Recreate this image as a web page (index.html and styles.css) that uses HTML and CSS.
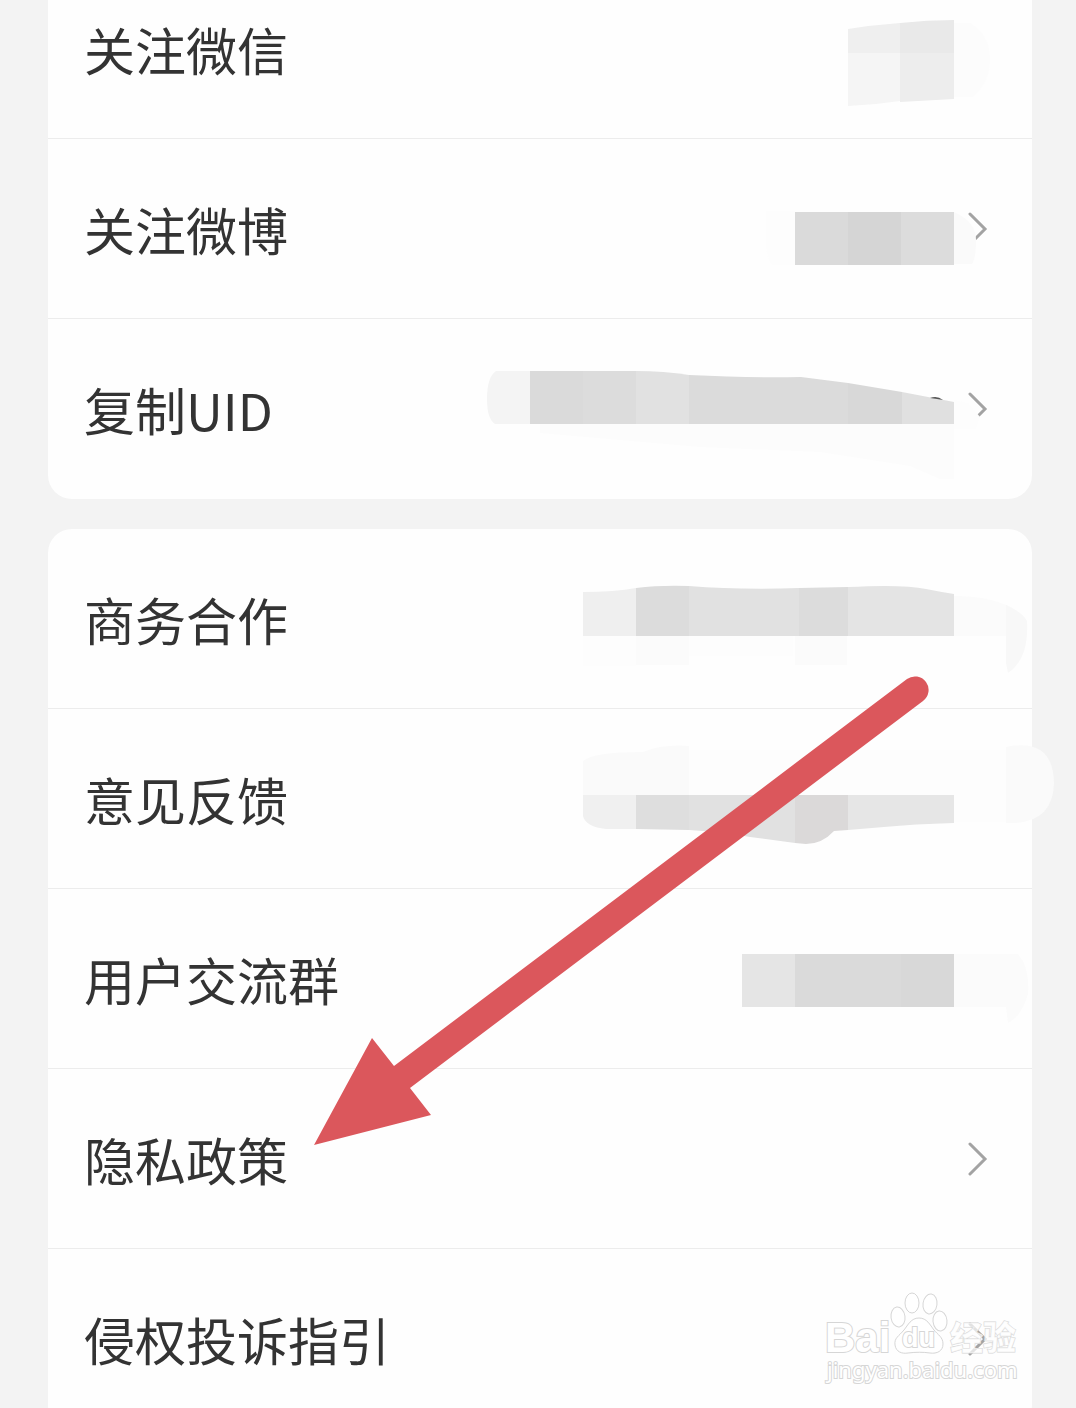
FILE: index.html
```html
<!DOCTYPE html>
<html lang="zh-CN">
<head>
    <meta charset="UTF-8">
    <meta name="viewport" content="width=device-width, initial-scale=1.0">
    <title>关于我们</title>
    <link rel="stylesheet" href="styles.css">
</head>
<body>
<main class="page">
    <nav class="card">
        <a class="row" href="#wechat">
            <span class="label">关注微信</span>
            <!-- mosaic over the account name -->
            <svg class="mosaic" viewBox="432 0 600 180" aria-hidden="true">
                <path fill="#fcfcfc" d="M954 64h16q20 12 20 36t-18 38h-18z"/>
                <path fill="#efefef" d="M848 70q25-4 52-6v30h-52z"/>
                <path fill="#f5f5f5" d="M848 94h52v48q-26 4-52 5z"/>
                <path fill="#e9e9e9" d="M900 64q27-3 54-3v33h-54z"/>
                <path fill="#ededed" d="M900 94h54v46l-54 3z"/>
            </svg>
        </a>
        <a class="row" href="#weibo">
            <span class="label">关注微博</span>
            <svg class="chevron" viewBox="0 0 20 34" aria-hidden="true"><path d="M2 2l15 15L2 32"/></svg>
            <svg class="mosaic" viewBox="432 0 600 180" aria-hidden="true">
                <path fill="#fdfdfd" d="M766 72h29v54h-22q-7-8-7-20z"/>
                <path fill="#fafafa" d="M954 73q22 10 22 28t-4 24h-18z"/>
                <path fill="#dadada" d="M795 73h53v53h-53z"/>
                <path fill="#d5d5d5" d="M848 73h53v53h-53z"/>
                <path fill="#dcdcdc" d="M901 73h53v53h-53z"/>
            </svg>
        </a>
        <a class="row" href="#uid">
            <span class="label">复制UID</span>
            <svg class="chevron" viewBox="0 0 20 34" aria-hidden="true"><path d="M2 2l15 15L2 32"/></svg>
            <svg class="mosaic" viewBox="432 0 600 180" aria-hidden="true">
                <path fill="#fcfcfc" d="M540 105h414v55h-14l-30-13-90-14-120-5-160-14z"/>
                <path fill="#fdfdfd" d="M954 81l14 3 12 14-4 12h-22z"/>
                <path fill="#f4f4f4" d="M530 52h-34q-9 6-9 28 0 20 8 25h35z"/>
                <path fill="#dadada" d="M530 52h53v53h-53z"/>
                <path fill="#dcdcdc" d="M583 52h53v53h-53z"/>
                <path fill="#e1e1e1" d="M636 52q28 0 53 4v49h-53z"/>
                <path fill="#dbdbdb" d="M689 56q60 3 112 2l47 6v41H689z"/>
                <path fill="#d8d8d8" d="M848 64l54 9v32h-54z"/>
                <path fill="#e0e0e0" d="M902 73l52 10v22h-52z"/>
                <path fill="#555" d="M930 79q7-3 13 2l-6-1z"/>
            </svg>
        </a>
    </nav>

    <nav class="card">
        <a class="row" href="#business">
            <span class="label">商务合作</span>
            <svg class="mosaic" viewBox="432 0 600 180" aria-hidden="true">
                <path fill="#fdfdfd" d="M583 107h53v30h-53zM689 107h104v20H689z"/>
                <path fill="#fbfbfb" d="M636 107h53v29h-53zM795 107h52v29h-52z"/>
                <path fill="#fbfbfb" d="M954 67q50 0 71 22v18h-71z"/>
                <path fill="#f8f8f8" d="M1006 76q16 7 21 16 2 38-19 52l-2-10z"/>
                <path fill="#efefef" d="M583 63q32 0 53-4v48h-53z"/>
                <path fill="#dcdcdc" d="M636 59q24-3 53-2v50h-53z"/>
                <path fill="#e1e1e1" d="M689 57q50 4 110 2v48H689z"/>
                <path fill="#dcdcdc" d="M799 59l49-1v49h-49z"/>
                <path fill="#e4e4e4" d="M848 58q55-3 78 2 15 3 28 5v42H848z"/>
            </svg>
        </a>
        <a class="row" href="#feedback">
            <span class="label">意见反馈</span>
            <svg class="mosaic" viewBox="432 0 600 180" aria-hidden="true">
                <path fill="#fdfdfd" d="M689 41h317v72H689z"/>
                <path fill="#fafafa" d="M583 86V52q10-9 60-9 20-8 46-6v49z"/>
                <path fill="#fafafa" d="M1006 38q47-10 48 36-1 42-48 40z"/>
                <path fill="#f0f0f0" d="M583 86h53v34h-30q-20-2-23-13z"/>
                <path fill="#dedede" d="M636 86h53v35l-53-1z"/>
                <path fill="#e1e1e1" d="M689 86h106v48l-45-6q-25-5-61-7z"/>
                <path fill="#dbd9d9" d="M795 86h53v35l-14 1q-12 13-28 13l-11-1z"/>
                <path fill="#e6e6e6" d="M848 86h106v28q-40 1-70 4l-36 3z"/>
            </svg>
        </a>
        <a class="row" href="#group">
            <span class="label">用户交流群</span>
            <svg class="mosaic" viewBox="432 0 600 180" aria-hidden="true">
                <path fill="#fbfbfb" d="M954 65h64q12 14 10 40-6 22-20 29l-2-16h-52z"/>
                <path fill="#e5e5e5" d="M742 65h53v53h-53z"/>
                <path fill="#dadada" d="M795 65h106v53H795z"/>
                <path fill="#d8d8d8" d="M901 65h53v53h-53z"/>
            </svg>
        </a>
        <a class="row" href="#privacy">
            <span class="label">隐私政策</span>
            <svg class="chevron" viewBox="0 0 20 34" aria-hidden="true"><path d="M2 2l15 15L2 32"/></svg>
        </a>
        <a class="row" href="#complaint">
            <span class="label">侵权投诉指引</span>
            <svg class="chevron" viewBox="0 0 20 34" aria-hidden="true"><path d="M2 2l15 15L2 32"/></svg>
            <svg class="watermark" viewBox="0 0 200 100" role="img" aria-label="Baidu 经验">
                <text class="wm-brand" x="2" y="63">Bai</text>
                <g class="wm-paw">
                    <ellipse cx="75" cy="28" rx="7" ry="10" transform="rotate(-8 75 28)"/>
                    <ellipse cx="89" cy="14" rx="7" ry="10"/>
                    <ellipse cx="107" cy="15" rx="7" ry="10" transform="rotate(8 107 15)"/>
                    <ellipse cx="117" cy="32" rx="7" ry="10" transform="rotate(-6 117 32)"/>
                    <path d="M96 29c-8 0-11 7-15 12-5 6-10 8-9 15 1 7 7 9 13 8 8-1 15-1 22 0 7 1 13-2 13-9 0-7-5-9-9-14s-7-12-15-12z"/>
                </g>
                <text class="wm-du" x="79" y="58">du</text>
                <text class="wm-cn" x="127" y="61">经验</text>
                <text class="wm-url" x="4" y="89">jingyan.baidu.com</text>
            </svg>
        </a>
        <svg class="arrow" viewBox="314 676 616 470" aria-hidden="true">
            <path d="M314 1145L372 1038L394 1066L907 679A13 13 0 0 1 923 701L410 1088L431 1115Z"/>
        </svg>
    </nav>
</main>
</body>
</html>
```
FILE: styles.css
```css
* {
    box-sizing: border-box;
}
html, body {
    height: 100%;
}
body {
    margin: 0;
    overflow: hidden;
    background-color: #f3f3f3;
    font-family: "Noto Sans CJK SC", sans-serif;
    color: #333333;
}
/* the list is scrolled a little way down */
.page {
    display: flex;
    flex-direction: column;
    gap: 30px;
    margin-top: -41px;
    padding: 0 44px 0 48px;
}
.card {
    position: relative;
    background-color: #fefefe;
    border-radius: 24px;
}
.row {
    position: relative;
    display: flex;
    align-items: center;
    justify-content: space-between;
    height: 180px;
    padding: 0 44px 0 36px;
    border-bottom: 1px solid #ececec;
    color: inherit;
    text-decoration: none;
}
.row:last-of-type {
    border-bottom: none;
}
.label {
    font-size: 51px;
    line-height: 72px;
}
.chevron {
    width: 20px;
    height: 34px;
    fill: none;
    stroke: #a3a3a3;
    stroke-width: 3;
    stroke-linecap: round;
}
.mosaic {
    position: absolute;
    top: 0;
    right: 0;
    width: 600px;
    height: 180px;
    overflow: visible;
}
.arrow {
    position: absolute;
    top: 147px;
    right: 102px;
    width: 616px;
    height: 470px;
    fill: #db575c;
}
.watermark {
    position: absolute;
    top: 40px;
    right: 9px;
    width: 200px;
    height: 100px;
    fill: rgba(255, 255, 255, 0.6);
    stroke: #d6d6d6;
    stroke-width: 1;
}
/* outline goes under the fill so the small letters stay open */
.watermark text {
    fill: #ffffff;
    stroke-width: 2;
    paint-order: stroke;
}
.watermark .wm-cn {
    fill: rgba(255, 255, 255, 0.7);
    stroke-width: 1;
}
.wm-brand {
    font: bold 42px "Liberation Sans", sans-serif;
}
.wm-du {
    font: bold 27px "Liberation Sans", sans-serif;
}
.wm-cn {
    font: 900 33px "Noto Sans CJK SC", sans-serif;
}
.wm-url {
    font: 22px "Noto Sans", sans-serif;
}
```
